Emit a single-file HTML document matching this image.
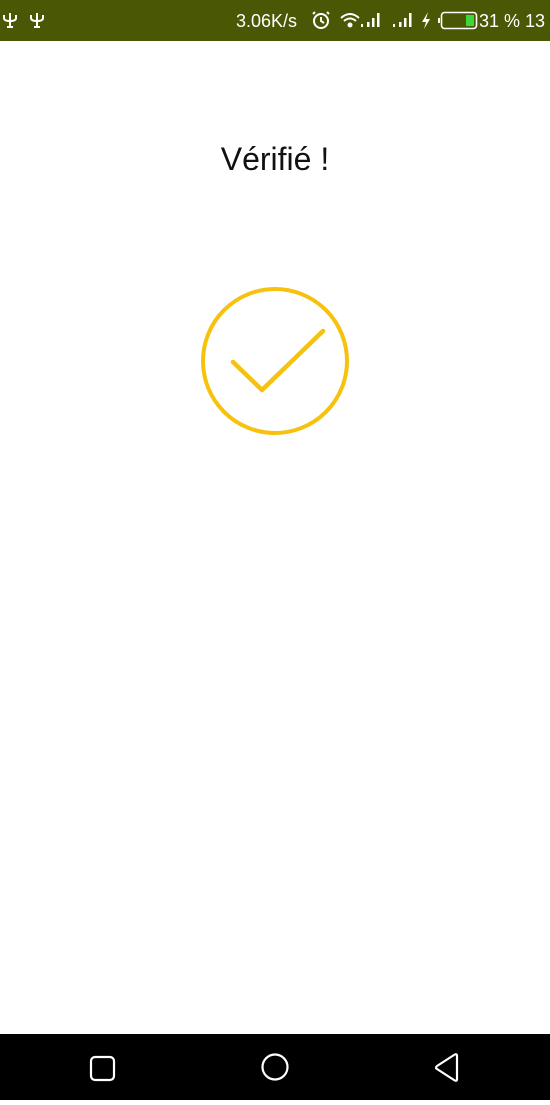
<!DOCTYPE html>
<html><head><meta charset="utf-8"><style>
html,body{margin:0;padding:0;width:550px;height:1100px;background:#fff;overflow:hidden;font-family:"Liberation Sans",Roboto,sans-serif;}
.sb{position:absolute;left:0;top:0;width:550px;height:41px;background:#4a5806;color:#fff;}
.title{position:absolute;left:0;width:550px;top:141px;text-align:center;font-size:32px;color:#111;}
.nav{position:absolute;left:0;top:1034px;width:550px;height:66px;background:#000;}
</style></head><body>
<div class="sb">
<svg width="550" height="41" style="position:absolute;left:0;top:0">
 <g stroke="#fff" stroke-width="2" fill="none">
  <path d="M10 13v14M4 15v3q0 3 6 3q6 0 6-3v-3M7 27h6"/>
  <path d="M37 13v14M31 15v3q0 3 6 3q6 0 6-3v-3M34 27h6"/>
  <circle cx="321" cy="21" r="7"/><path d="M321 17v4l3 2M315 12l-2 2M327 12l2 2"/>
  <path d="M341 18q9-8 18 0M344 21q6-5 12 0"/><circle cx="350" cy="25" r="1.5" fill="#fff"/>
 </g>
 <text x="236" y="27" fill="#fff" font-size="18" font-family="Liberation Sans,sans-serif">3.06K/s</text>
 <g fill="#fff">
  <rect x="361" y="24" width="2" height="3"/><rect x="367" y="22" width="2.5" height="5"/><rect x="372" y="18" width="2.5" height="9"/><rect x="377" y="13" width="2.5" height="14"/>
  <rect x="393" y="24" width="2" height="3"/><rect x="399" y="22" width="2.5" height="5"/><rect x="404" y="18" width="2.5" height="9"/><rect x="409" y="13" width="2.5" height="14"/>
  <path d="M428 12l-6 10h4l-2 7 6-10h-4z"/>
  <rect x="438" y="18" width="2" height="5"/>
 </g>
 <rect x="441.5" y="12.5" width="35" height="16" rx="3" fill="none" stroke="#fff" stroke-width="1.6"/>
 <rect x="466" y="15" width="8" height="11" fill="#3fd63a"/>
 <text x="479" y="27" fill="#fff" font-size="18" font-family="Liberation Sans,sans-serif">31 % 13</text>
</svg>
</div>
<div class="title">Vérifié !</div>
<svg width="550" height="1100" style="position:absolute;left:0;top:0">
 <circle cx="275" cy="361" r="72" fill="none" stroke="#f6c20e" stroke-width="4"/>
 <path d="M233 362L262 390L323 331" fill="none" stroke="#f6c20e" stroke-width="4.5" stroke-linecap="round" stroke-linejoin="round"/>
</svg>
<div class="nav">
<svg width="550" height="66">
 <rect x="91" y="23" width="23" height="23" rx="4" fill="none" stroke="#fff" stroke-width="2.2"/>
 <circle cx="275" cy="33" r="12.5" fill="none" stroke="#fff" stroke-width="2.2"/>
 <path d="M457 22L457 45Q457 48 454 46L437 35Q435 34 437 32L454 21Q457 19 457 22Z" fill="none" stroke="#fff" stroke-width="2.2" stroke-linejoin="round"/>
</svg>
</div>
</body></html>
